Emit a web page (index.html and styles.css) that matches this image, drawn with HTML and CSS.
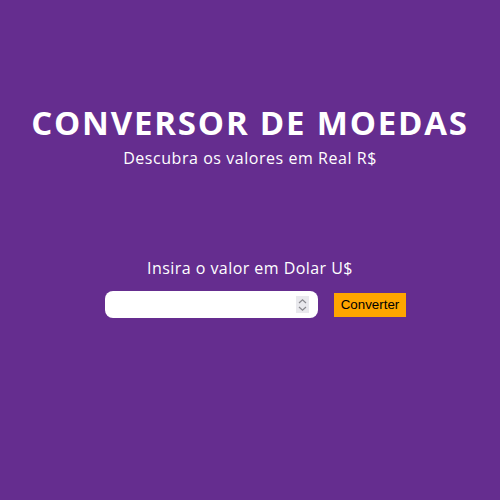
FILE: index.html
```html
<!DOCTYPE html>
<html lang="pt-BR">
<head>
<meta charset="utf-8">
<title>Conversor de Moedas</title>
<link rel="stylesheet" href="styles.css">
</head>
<body>
<main class="page">
  <header class="hero">
    <h1 class="title">CONVERSOR DE MOEDAS</h1>
    <p class="subtitle">Descubra os valores em Real R$</p>
  </header>
  <section class="form">
    <label class="label" for="valor">Insira o valor em Dolar U$</label>
    <div class="row">
      <div class="field">
        <input class="input" id="valor" type="number">
        <span class="spin">
          <svg width="9" height="14" viewBox="0 0 9 14" fill="none" stroke="#8a8a8f" stroke-width="1.2">
            <path d="M1 5 L4.5 1.8 L8 5"/>
            <path d="M1 9 L4.5 12.2 L8 9"/>
          </svg>
        </span>
      </div>
      <button class="btn" type="button">Converter</button>
    </div>
  </section>
</main>
</body>
</html>
```
FILE: styles.css
```css
html, body {
  margin: 0;
  height: 100%;
}
body {
  background: #652d8f;
  color: #fff;
  font-family: "Open Sans", "DejaVu Sans", sans-serif;
}
.page {
  display: flex;
  flex-direction: column;
  align-items: center;
  padding-top: 103px;
}
.hero {
  display: flex;
  flex-direction: column;
  align-items: center;
}
.title {
  margin: 0;
  font-size: 33px;
  font-weight: 700;
  line-height: 40px;
  letter-spacing: 1.8px;
}
.subtitle {
  margin: 5px 0 0;
  font-size: 16px;
  line-height: 20px;
  letter-spacing: 0.55px;
}
.form {
  margin-top: 90px;
  display: flex;
  flex-direction: column;
  align-items: center;
}
.label {
  font-size: 16px;
  line-height: 20px;
  letter-spacing: 0.45px;
}
.row {
  margin-top: 13px;
  margin-left: 11px;
  display: flex;
  align-items: center;
  gap: 16px;
}
.field {
  width: 213px;
  height: 27px;
  box-sizing: border-box;
  display: flex;
  align-items: center;
  background: #fff;
  border-radius: 8px;
  padding: 0 9px 0 8px;
}
.input {
  flex: 1;
  min-width: 0;
  border: none;
  outline: none;
  background: transparent;
  padding: 0;
  font-family: "Liberation Sans", sans-serif;
  font-size: 13.33px;
  -moz-appearance: textfield;
}
.input::-webkit-inner-spin-button,
.input::-webkit-outer-spin-button {
  -webkit-appearance: none;
  margin: 0;
}
.spin {
  width: 13px;
  height: 17px;
  background: #e9e9ed;
  display: flex;
  align-items: center;
  justify-content: center;
}
.btn {
  width: 72px;
  height: 24px;
  border: none;
  background: #ffa500;
  color: #000;
  font-family: "Liberation Sans", Arial, sans-serif;
  font-size: 13.33px;
  padding: 0;
}
```
